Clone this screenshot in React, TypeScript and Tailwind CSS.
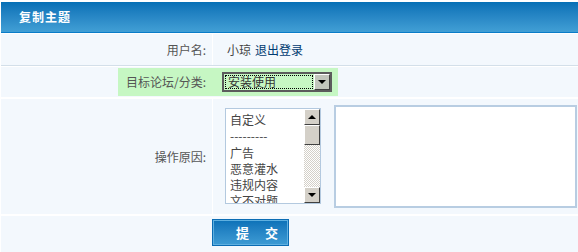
import React from "react";

const reasons = ["自定义", "---------", "广告", "恶意灌水", "违规内容", "文不对题"];

function ScrollBtn({ dir }: { dir: "up" | "down" }) {
  return (
    <div className="w-[16px] h-[16px] bg-[#d4d0c8] border border-t-white border-l-white border-r-[#404040] border-b-[#404040] flex items-center justify-center">
      {dir === "up" ? (
        <div className="w-0 h-0 border-l-[4px] border-r-[4px] border-b-[4px] border-l-transparent border-r-transparent border-b-black" />
      ) : (
        <div className="w-0 h-0 border-l-[4px] border-r-[4px] border-t-[4px] border-l-transparent border-r-transparent border-t-black" />
      )}
    </div>
  );
}

export default function App() {
  return (
    <div
      className="w-[578px] h-[252px] bg-white pt-[2px] pl-px overflow-hidden text-[12px] leading-none"
      style={{ fontFamily: '"Noto Sans CJK SC", "Liberation Sans", sans-serif' }}
    >
      {/* title bar */}
      <div className="h-[31px] bg-gradient-to-b from-[#0570b6] to-[#419fd5] border-b border-[#0a7cc8] flex items-center pl-[18px]">
        <span className="text-white font-bold text-[12px] tracking-[1px]">复制主题</span>
      </div>

      <div className="border-t border-white bg-[#f3f8fd]">
        {/* user */}
        <div className="flex h-[32px] border-b border-[#d3dfe9]">
          <div className="w-[211px] flex items-center justify-end pr-[6px] text-[#555]">用户名:</div>
          <div className="flex-1 border-l border-white flex items-center pl-[14px] text-[#444]">
            小琼 <span className="ml-[4px] text-[#003a70]">退出登录</span>
          </div>
        </div>

        {/* forum select */}
        <div className="flex h-[32px] border-t border-white border-b border-[#d3dfe9] items-center">
          <div className="w-[337px] h-[28px] flex items-center">
            <div className="w-[211px] h-full flex items-center justify-end pr-[6px] text-[#555] bg-[linear-gradient(to_right,transparent_117px,#c6f7c3_117px)]">
              目标论坛/分类:
            </div>
            <div className="flex-1 h-full bg-[#c6f7c3] flex items-center pl-[10px]">
              <div className="w-[110px] h-[20px] border-2 border-[#5c5c5c] bg-[#c6f7c3] flex items-stretch">
                <div className="flex-1 m-px border border-dotted border-black flex items-center pl-[2px] text-[#333]">
                  安装使用
                </div>
                <div className="w-[16px] bg-[#c2c6bc] border border-t-white border-l-white border-r-[#404040] border-b-[#404040] flex items-center justify-center">
                  <div className="w-0 h-0 border-l-[4px] border-r-[4px] border-t-[4px] border-l-transparent border-r-transparent border-t-black" />
                </div>
              </div>
            </div>
          </div>
        </div>

        {/* reason */}
        <div className="flex h-[117px] border-t border-white border-b border-[#d3dfe9]">
          <div className="w-[211px] flex items-center justify-end pr-[6px] text-[#555]">操作原因:</div>
          <div className="flex-1 border-l border-white flex items-start pt-[6px]">
            <div className="ml-[12px] mt-[3px] w-[96px] h-[96px] border border-[#b3c9df] bg-white flex">
              <div className="flex-1 overflow-hidden pl-[4px] pt-[3px] text-[#444]">
                {reasons.map((r) => (
                  <div key={r} className="h-[16.3px] leading-[16px]">
                    {r}
                  </div>
                ))}
              </div>
              <div className="w-[16px] flex flex-col">
                <ScrollBtn dir="up" />
                <div className="h-[20px] bg-[#d4d0c8] border border-t-white border-l-white border-r-[#404040] border-b-[#404040]" />
                <div className="flex-1 bg-[repeating-conic-gradient(#d4d0c8_0%_25%,#ffffff_0%_50%)] bg-[length:2px_2px]" />
                <ScrollBtn dir="down" />
              </div>
            </div>
            <div className="ml-[13px] w-[243px] h-[103px] border-2 border-[#b8cde2] bg-white" />
          </div>
        </div>

        {/* submit */}
        <div className="h-[40px] border-t border-white flex items-start pt-[3px] pl-[211px]">
          <button className="w-[77px] h-[27px] border border-[#0b6cb3] bg-gradient-to-b from-[#0a71b8] to-[#3e9cd4] shadow-[inset_0_0_0_1px_#5fb0e0] text-white font-bold text-[13px] flex items-center pl-[23px] gap-[16px]">
            <span>提</span>
            <span>交</span>
          </button>
        </div>
      </div>
    </div>
  );
}
